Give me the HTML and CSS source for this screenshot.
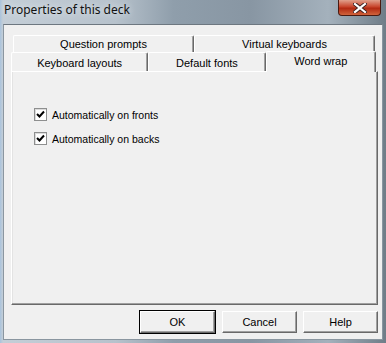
FILE: index.html
```html
<!DOCTYPE html>
<html lang="en">
<head>
    <meta charset="UTF-8">
    <title>Properties of this deck</title>
    <link rel="stylesheet" href="styles.css">
</head>
<body>
    <div class="window">
        <div class="titlebar">
            <span class="title">Properties of this deck</span>
            <div class="close">
                <svg width="14" height="10" viewBox="0 0 14 10">
                    <path d="M2 1 L12 9 M12 1 L2 9" stroke="#3a2020" stroke-width="4" stroke-linecap="square"/>
                    <path d="M2 1 L12 9 M12 1 L2 9" stroke="#ffffff" stroke-width="2.2" stroke-linecap="square"/>
                </svg>
            </div>
        </div>

        <div class="client">
            <div class="tab-row back">
                <div class="tab w181">Question prompts</div>
                <div class="tab w181">Virtual keyboards</div>
            </div>
            <div class="tab-row front">
                <div class="tab w138">Keyboard layouts</div>
                <div class="tab w118">Default fonts</div>
                <div class="tab w111 selected">Word wrap</div>
            </div>
            <div class="panel">
                <label class="check">
                    <span class="box">
                        <svg width="9" height="9" viewBox="0 0 9 9"><path d="M1 4 L3.5 6.5 L8 1.5" stroke="#000" stroke-width="2" fill="none"/></svg>
                    </span>
                    Automatically on fronts
                </label>
                <label class="check">
                    <span class="box">
                        <svg width="9" height="9" viewBox="0 0 9 9"><path d="M1 4 L3.5 6.5 L8 1.5" stroke="#000" stroke-width="2" fill="none"/></svg>
                    </span>
                    Automatically on backs
                </label>
            </div>
            <div class="buttons">
                <button class="btn default">OK</button>
                <button class="btn">Cancel</button>
                <button class="btn">Help</button>
            </div>
        </div>
    </div>
</body>
</html>
```

FILE: styles.css
```css
body {
    margin: 0;
    font-family: "Liberation Sans", Arial, sans-serif;
    font-size: 11px;
    color: #000;
}

.window {
    width: 386px;
    height: 343px;
    display: flex;
    flex-direction: column;
    background: linear-gradient(90deg, #a9c3dc 0, #c4ced7 3px, #b7c2cc 30%, #8f9eab 45%, #8896a3 65%, #a4b1bc 85%, #6f7d88 100%);
}

.titlebar {
    height: 24px;
    display: flex;
    justify-content: space-between;
    align-items: flex-start;
    padding-left: 4px;
}

.title {
    font-family: "Noto Sans", "Liberation Sans", sans-serif;
    font-size: 12px;
    line-height: 20px;
    color: #111;
    text-shadow: 0 0 6px #e8eef3;
}

.close {
    width: 41px;
    height: 15px;
    margin-right: 5px;
    display: flex;
    justify-content: center;
    align-items: center;
    background: linear-gradient(#e0a08c, #c8452c 45%, #b22a12 55%, #d0643c);
    border: 1px solid #4a1a10;
    border-top: none;
    border-radius: 0 0 4px 4px;
}

.client {
    flex: 1;
    margin: 0 3px 3px 3px;
    padding: 10px 6px 0 7px;
    background: #f0f0f0;
    border: 1px solid #8a96a0;
    border-top-color: #6d7780;
    box-sizing: border-box;
}

.tab-row {
    display: flex;
}

.tab-row.back {
    height: 17px;
    margin-left: 2px;
}

.tab-row.front {
    height: 19px;
}

.tab {
    box-sizing: border-box;
    text-align: center;
    background: #f0f0f0;
    border-top: 1px solid #ffffff;
    border-left: 1px solid #ffffff;
    border-right: 1px solid #696969;
    box-shadow: inset -1px 0 #a0a0a0;
    border-radius: 2px 2px 0 0;
    line-height: 16px;
}

.front .tab {
    line-height: 18px;
    padding-top: 1px;
}

.tab.selected {
    height: 21px;
    margin-top: -1px;
    padding-top: 0;
    position: relative;
    z-index: 1;
}

.w181 { width: 181px; }
.w138 { width: 138px; }
.w118 { width: 118px; }
.w111 { width: 111px; }

.panel {
    width: 367px;
    height: 234px;
    box-sizing: border-box;
    border-top: 1px solid #ffffff;
    border-left: 1px solid #ffffff;
    border-right: 1px solid #696969;
    border-bottom: 1px solid #696969;
    box-shadow: inset -1px -1px #a0a0a0, inset 1px 0 #e3e3e3;
    padding: 36px 0 0 22px;
    display: flex;
    flex-direction: column;
    gap: 11px;
}

.check {
    display: flex;
    align-items: center;
    gap: 5px;
    height: 13px;
    font-size: 10.5px;
}

.box {
    width: 13px;
    height: 13px;
    box-sizing: border-box;
    border: 1px solid #8e8f8f;
    background: #ffffff;
    box-shadow: inset 1px 1px #dcdcdc;
    display: flex;
    justify-content: center;
    align-items: center;
}

.buttons {
    display: flex;
    justify-content: flex-end;
    gap: 6px;
    margin-top: 6px;
    width: 367px;
}

.btn {
    width: 75px;
    height: 22px;
    font-family: "Liberation Sans", Arial, sans-serif;
    font-size: 11px;
    background: #f0f0f0;
    border: 1px solid;
    border-color: #ffffff #696969 #696969 #ffffff;
    box-shadow: inset -1px -1px #a0a0a0;
    padding: 0;
}

.btn.default {
    width: 75px;
    margin-right: 1px;
    outline: 1px solid #000;
    border-color: #ffffff #696969 #696969 #ffffff;
}
```
